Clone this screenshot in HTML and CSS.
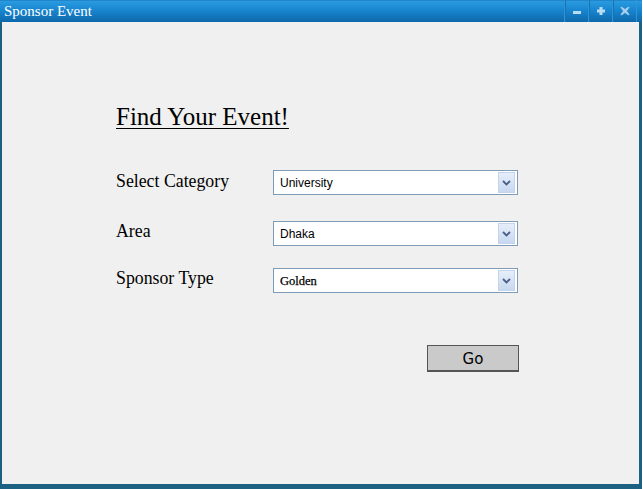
FILE: index.html
```html
<!DOCTYPE html>
<html>
<head>
<meta charset="utf-8">
<link rel="stylesheet" href="styles.css">
</head>
<body>
<div class="window">
  <div class="titlebar">
    <span class="title">Sponsor Event</span>
    <div class="controls">
      <div class="ctl"><svg width="10" height="10" viewBox="0 0 10 10"><rect x="1" y="5" width="8" height="3" fill="#b9dcf2"/></svg></div>
      <div class="ctl"><svg width="10" height="10" viewBox="0 0 10 10"><path d="M3.5 1h3v2.5H9v3H6.5V9h-3V6.5H1v-3h2.5z" fill="#b9dcf2"/></svg></div>
      <div class="ctl"><svg width="10" height="10" viewBox="0 0 10 10"><path d="M1.5 1l3.5 2.5L8.5 1 9 1.5 6.5 5 9 8.5 8.5 9 5 6.5 1.5 9 1 8.5 3.5 5 1 1.5z" fill="#a9cfea" stroke="#a9cfea" stroke-width="0.8"/></svg></div>
    </div>
  </div>
  <div class="content">
    <h1 class="heading">Find Your Event!</h1>
    <div class="form">
      <div class="row row1">
        <span class="label">Select Category</span>
        <div class="select"><span class="val sans">University</span><span class="arrow"><svg width="9" height="6" viewBox="0 0 9 6"><path d="M1 1l3.5 3.5L8 1" fill="none" stroke="#4a5f86" stroke-width="1.8"/></svg></span></div>
      </div>
      <div class="row row2">
        <span class="label">Area</span>
        <div class="select"><span class="val sans">Dhaka</span><span class="arrow"><svg width="9" height="6" viewBox="0 0 9 6"><path d="M1 1l3.5 3.5L8 1" fill="none" stroke="#4a5f86" stroke-width="1.8"/></svg></span></div>
      </div>
      <div class="row row3">
        <span class="label">Sponsor Type</span>
        <div class="select"><span class="val serif">Golden</span><span class="arrow"><svg width="9" height="6" viewBox="0 0 9 6"><path d="M1 1l3.5 3.5L8 1" fill="none" stroke="#4a5f86" stroke-width="1.8"/></svg></span></div>
      </div>
      <div class="actions">
        <button class="go">Go</button>
      </div>
    </div>
  </div>
</div>
</body>
</html>
```
FILE: styles.css
```css
html, body {
  margin: 0;
  padding: 0;
  background: #ffffff;
}
.window {
  width: 642px;
  height: 489px;
  display: flex;
  flex-direction: column;
}
.titlebar {
  height: 22px;
  flex: none;
  background: linear-gradient(#1670b4 0px, #2a9be0 1px, #1886d0 10px, #0e68aa 22px);
  display: flex;
  align-items: center;
  justify-content: space-between;
}
.title {
  color: #ffffff;
  font-family: "Liberation Serif", serif;
  font-size: 15px;
  padding-left: 4px;
  padding-top: 1px;
}
.controls {
  display: flex;
  height: 22px;
  margin-right: 5px;
}
.ctl {
  width: 23px;
  height: 22px;
  display: flex;
  align-items: center;
  justify-content: center;
  border-left: 1px solid #2f94d2;
  box-shadow: inset 1px 0 0 #1374b8;
}
.ctl:last-child {
  border-right: 1px solid #2f94d2;
}
.content {
  flex: 1;
  background: #f0f0f0;
  border-left: 2px solid #1d6182;
  border-right: 3px solid #1d6182;
  border-bottom: 5px solid #1d6182;
  padding-left: 114px;
  padding-top: 80px;
}
.heading {
  margin: 0;
  font-family: "Liberation Serif", serif;
  font-weight: normal;
  font-size: 25px;
  line-height: 30px;
  color: #000;
  text-decoration: underline;
  text-decoration-thickness: 1px;
  text-underline-offset: 3px;
}
.form {
  width: 402px;
  margin-top: 38px;
}
.row {
  display: flex;
  align-items: flex-start;
}
.row2 { margin-top: 26px; }
.row3 { margin-top: 22px; }
.label {
  width: 157px;
  flex: none;
  font-family: "Liberation Serif", serif;
  font-size: 17.8px;
  line-height: 20px;
  color: #000;
  padding-top: 1px;
}
.row2 .label { padding-top: 0; }
.row3 .label { padding-top: 0; }
.select {
  width: 243px;
  height: 23px;
  border: 1px solid #7e9cb6;
  background: #ffffff;
  display: flex;
  align-items: center;
  justify-content: space-between;
}
.val {
  padding-left: 6px;
  color: #000;
}
.sans {
  font-family: "Liberation Sans", sans-serif;
  font-size: 12px;
}
.serif {
  font-family: "Liberation Serif", serif;
  font-size: 12.5px;
  padding-top: 2px;
  -webkit-text-stroke: 0.25px #000;
}
.arrow {
  width: 15px;
  height: 19px;
  margin-right: 2px;
  border: 1px solid #c3d4ec;
  background: linear-gradient(#e6eefa, #c8d8f0);
  display: flex;
  align-items: center;
  justify-content: center;
}
.actions {
  display: flex;
  justify-content: flex-end;
  margin-top: 52px;
}
.go {
  width: 92px;
  height: 27px;
  margin-right: -1px;
  background: #cacaca;
  border: 1px solid #555555;
  border-bottom-width: 2px;
  font-family: "DejaVu Sans", sans-serif;
  font-size: 15px;
  color: #000;
  padding: 2px 0 0 0;
}
```
